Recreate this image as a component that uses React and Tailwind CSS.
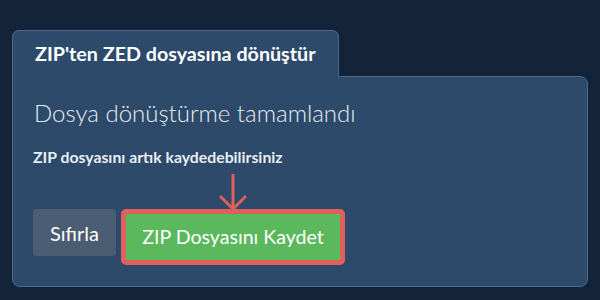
export default function App() {
  return (
    <div className="w-[600px] h-[300px] bg-[#12233a] pt-[30px] px-[12px] box-border" style={{ fontFamily: 'Lato, "Noto Sans", sans-serif' }}>
      <div className="flex flex-col">
        <div className="w-[327px] h-[47px] -mb-px relative z-10 bg-[#2d4a6a] border border-b-0 border-[#4d6a8b] rounded-t-[7px] pl-[22px] pt-[11px] box-border">
          <span className="text-white font-bold text-[19.7px] leading-[24px]">ZIP'ten ZED dosyasına dönüştür</span>
        </div>
        <div className="h-[211px] bg-[#2d4a6a] border border-[#4d6a8b] rounded-b-[8px] rounded-tr-[8px] px-[20px] pt-[21px] box-border">
          <div className="text-[#e8edf2] font-light text-[24px] leading-[30px] pl-[1px]">Dosya dönüştürme tamamlandı</div>
          <div className="mt-[19px] text-[#e8edf2] font-bold text-[15.8px] leading-[20px]">ZIP dosyasını artık kaydedebilirsiniz</div>
          <div className="mt-[42px] flex items-start gap-[5px]">
            <button className="w-[83px] h-[47px] bg-[#4b5d72] text-white text-[20px] rounded-[4px]">Sıfırla</button>
            <div className="relative border-[5px] border-[#e0605e] rounded-[5px]">
              <svg className="absolute left-1/2 -translate-x-1/2 bottom-full mb-[2px]" width="28" height="38" viewBox="0 0 28 38">
                <path d="M14 0 V35 M1 22 L14 35 L27 22" fill="none" stroke="#e0605e" strokeWidth="3" />
              </svg>
              <button className="w-[214px] h-[46px] bg-[#5cb85c] text-white text-[19.6px] block">ZIP Dosyasını Kaydet</button>
            </div>
          </div>
        </div>
      </div>
    </div>
  );
}
